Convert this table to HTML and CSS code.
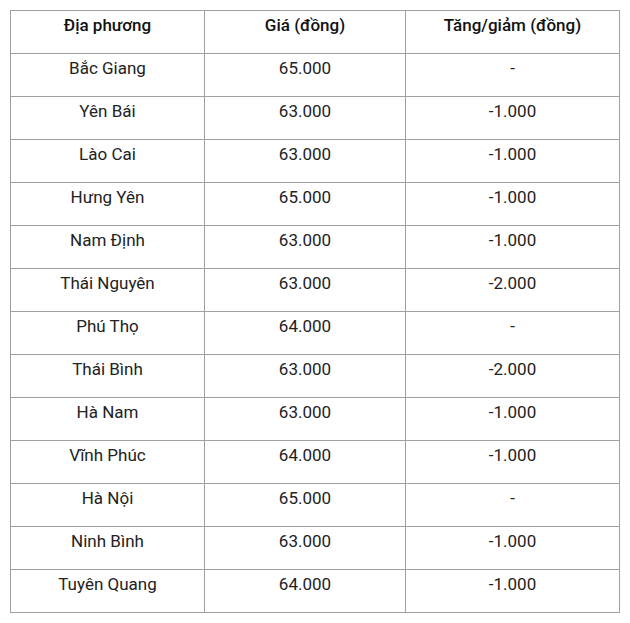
FILE: index.html
```html
<!DOCTYPE html>
<html lang="vi">
<head>
<meta charset="utf-8">
<link rel="stylesheet" href="styles.css">
</head>
<body>
<table class="price-table">
  <colgroup>
    <col class="c1"><col class="c2"><col class="c3">
  </colgroup>
  <thead>
    <tr><th>Địa phương</th><th>Giá (đồng)</th><th>Tăng/giảm (đồng)</th></tr>
  </thead>
  <tbody>
    <tr><td>Bắc Giang</td><td>65.000</td><td>-</td></tr>
    <tr><td>Yên Bái</td><td>63.000</td><td>-1.000</td></tr>
    <tr><td>Lào Cai</td><td>63.000</td><td>-1.000</td></tr>
    <tr><td>Hưng Yên</td><td>65.000</td><td>-1.000</td></tr>
    <tr><td>Nam Định</td><td>63.000</td><td>-1.000</td></tr>
    <tr><td>Thái Nguyên</td><td>63.000</td><td>-2.000</td></tr>
    <tr><td>Phú Thọ</td><td>64.000</td><td>-</td></tr>
    <tr><td>Thái Bình</td><td>63.000</td><td>-2.000</td></tr>
    <tr><td>Hà Nam</td><td>63.000</td><td>-1.000</td></tr>
    <tr><td>Vĩnh Phúc</td><td>64.000</td><td>-1.000</td></tr>
    <tr><td>Hà Nội</td><td>65.000</td><td>-</td></tr>
    <tr><td>Ninh Bình</td><td>63.000</td><td>-1.000</td></tr>
    <tr><td>Tuyên Quang</td><td>64.000</td><td>-1.000</td></tr>
  </tbody>
</table>
</body>
</html>
```
FILE: styles.css
```css
html, body {
  margin: 0;
  padding: 0;
  background: #ffffff;
}
body {
  padding: 10px 0 0 10px;
  font-family: Roboto, "Liberation Sans", sans-serif;
  color: #222222;
}
.price-table {
  border-collapse: collapse;
  width: 609px;
  table-layout: fixed;
}
.c1 { width: 194px; }
.c2 { width: 201px; }
.c3 { width: 214px; }
.price-table th,
.price-table td {
  border: 1px solid #a0a0a0;
  height: 43px;
  box-sizing: border-box;
  padding: 2px 6px 0;
  vertical-align: top;
  text-align: center;
  font-size: 17px;
  line-height: 24px;
}
.price-table th {
  font-weight: 500;
  color: #111111;
}
```
